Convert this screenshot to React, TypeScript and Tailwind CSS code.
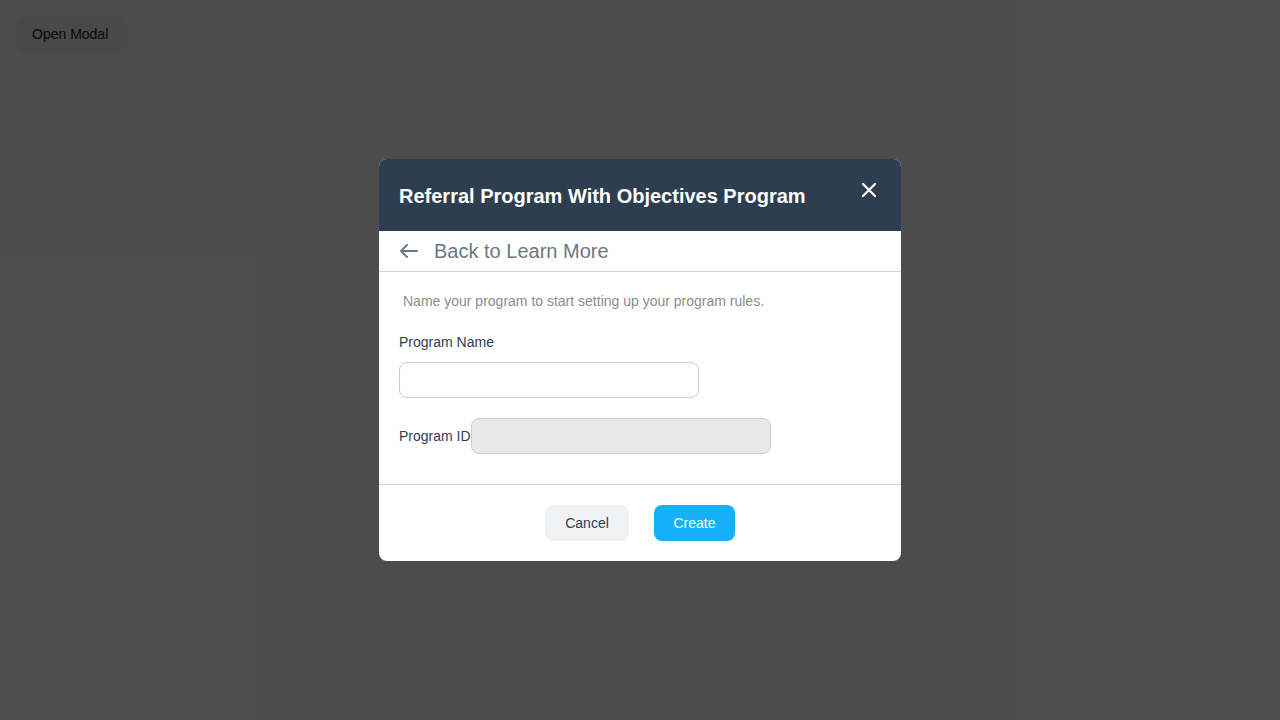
import React from "react";

export default function App() {
  return (
    <div className="relative w-[1280px] h-[720px] bg-white font-['Liberation_Sans',Arial,sans-serif]">
      <div className="p-4">
        <button className="h-9 px-4 rounded-lg bg-gray-100 text-[14px] text-gray-900">Open Modal</button>
      </div>
      <div className="absolute inset-0 bg-black/70 flex items-center justify-center">
        <div className="w-[522px] bg-white rounded-lg overflow-hidden">
          <div className="h-[72px] bg-[#2d3e50] flex items-center justify-between pl-5 pr-6">
            <h2 className="text-white font-bold text-[20px] pt-[2px]">Referral Program With Objectives Program</h2>
            <svg width="16" height="16" viewBox="0 0 16 16" className="mt-[-10px]" fill="none" stroke="white" strokeWidth="2.2" strokeLinecap="round">
              <path d="M2 2L14 14M14 2L2 14" />
            </svg>
          </div>
          <div className="h-[41px] flex items-center border-b border-[#cfd3d7] pl-5">
            <svg width="20" height="16" viewBox="0 0 20 16" fill="none" stroke="#6b7785" strokeWidth="2" strokeLinecap="round" strokeLinejoin="round">
              <path d="M18 8H2M8 2L2 8L8 14" />
            </svg>
            <span className="ml-[15px] text-[20px] text-[#6b7785]">Back to Learn More</span>
          </div>
          <div className="px-5 pt-[19px] pb-[30px]">
            <p className="pl-1 text-[14px] leading-5 text-[#8c8c8c]">Name your program to start setting up your program rules.</p>
            <label className="block mt-[21px] text-[14px] leading-5 text-[#2d3e50]">Program Name</label>
            <input className="block mt-[10px] w-[300px] h-9 rounded-lg border border-[#cccccc] bg-white outline-none" />
            <div className="flex items-center mt-5">
              <span className="text-[14px] leading-5 text-[#2d3e50]">Program ID</span>
              <input disabled className="w-[300px] h-9 rounded-lg border border-[#cccccc] bg-[#e9e9e9]" />
            </div>
          </div>
          <div className="border-t border-[#cfd3d7] flex justify-center gap-[25px] pt-5 pb-5">
            <button className="h-9 w-[84px] rounded-lg bg-[#f1f2f4] text-[14px] text-[#2d3e50]">Cancel</button>
            <button className="h-9 w-[81px] rounded-lg bg-[#15b1f7] text-[14px] text-white">Create</button>
          </div>
        </div>
      </div>
    </div>
  );
}
